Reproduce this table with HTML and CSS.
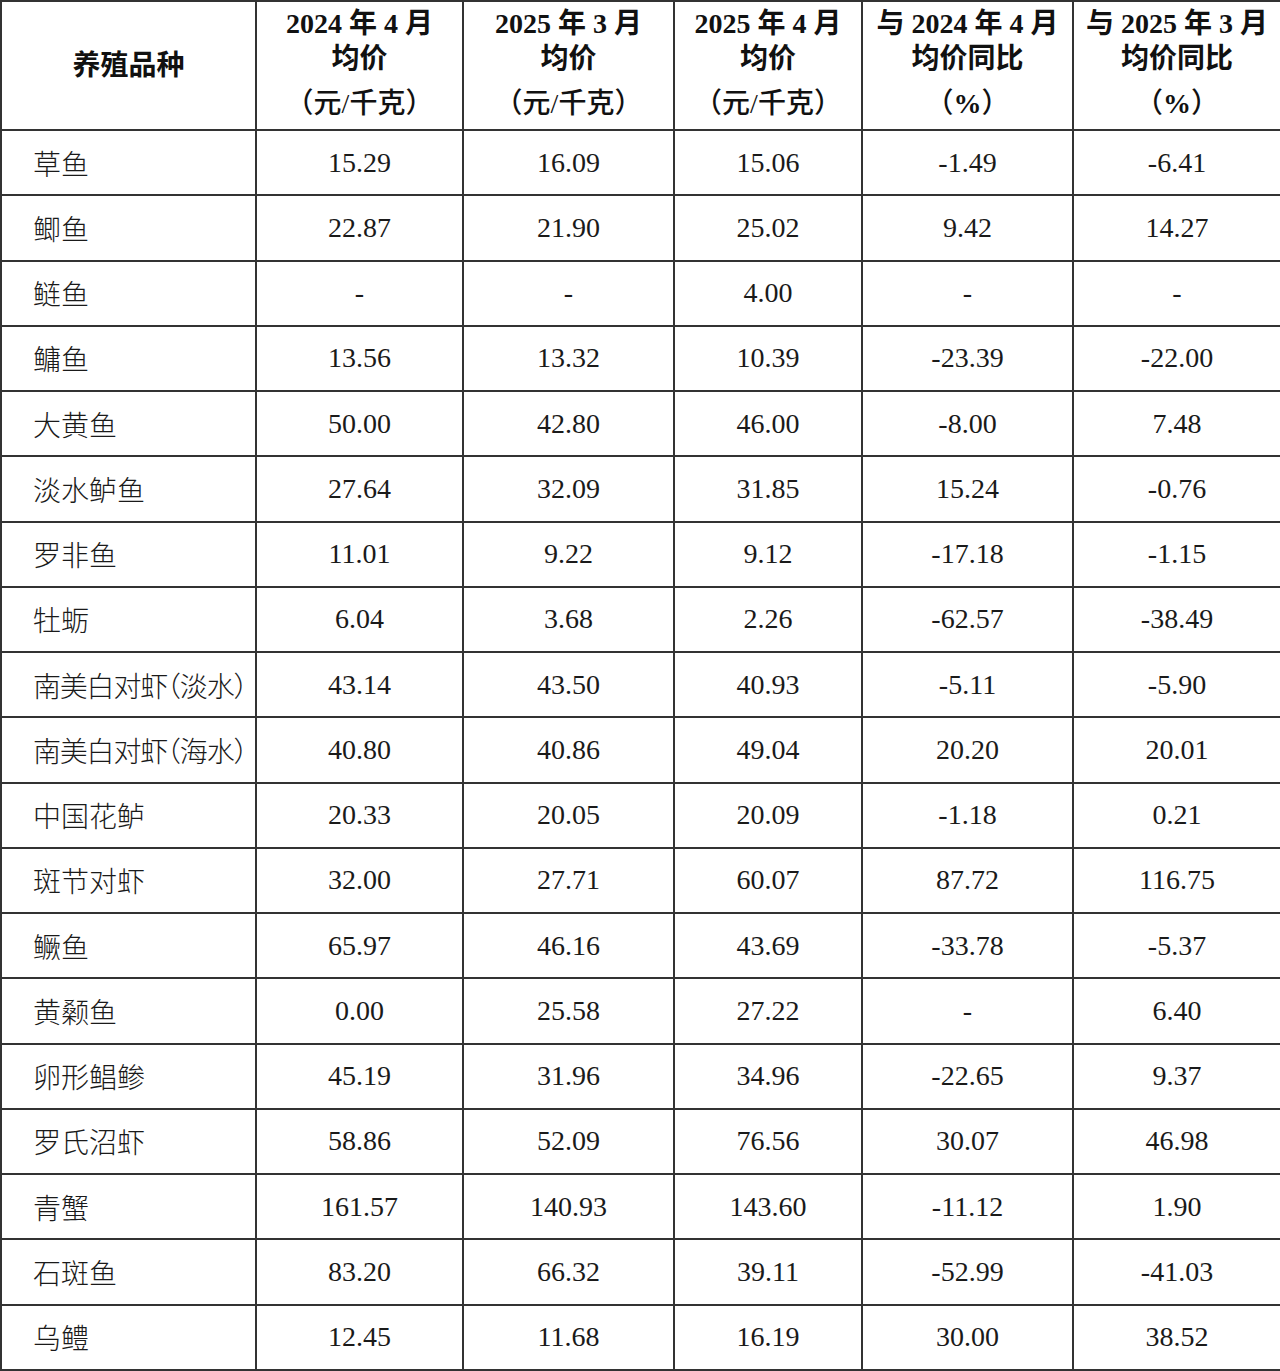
FILE: index.html
```html
<!DOCTYPE html>
<html lang="zh-CN">
<head>
<meta charset="utf-8">
<link rel="stylesheet" href="styles.css">
</head>
<body>
<table class="price-table">
  <colgroup>
    <col class="c1"><col class="c2"><col class="c3"><col class="c4"><col class="c5"><col class="c6">
  </colgroup>
  <thead>
    <tr>
      <th class="name-head">养殖品种</th>
      <th><div class="hl">2024 年 4 月</div><div class="hl">均价</div><div class="hl unit">（元/千克）</div></th>
      <th><div class="hl">2025 年 3 月</div><div class="hl">均价</div><div class="hl unit">（元/千克）</div></th>
      <th><div class="hl">2025 年 4 月</div><div class="hl">均价</div><div class="hl unit">（元/千克）</div></th>
      <th><div class="hl">与 2024 年 4 月</div><div class="hl">均价同比</div><div class="hl unit">（<span class="pct">%</span>）</div></th>
      <th><div class="hl">与 2025 年 3 月</div><div class="hl">均价同比</div><div class="hl unit">（<span class="pct">%</span>）</div></th>
    </tr>
  </thead>
  <tbody>
    <tr><td class="name">草鱼</td><td>15.29</td><td>16.09</td><td>15.06</td><td>-1.49</td><td>-6.41</td></tr>
    <tr><td class="name">鲫鱼</td><td>22.87</td><td>21.90</td><td>25.02</td><td>9.42</td><td>14.27</td></tr>
    <tr><td class="name">鲢鱼</td><td>-</td><td>-</td><td>4.00</td><td>-</td><td>-</td></tr>
    <tr><td class="name">鳙鱼</td><td>13.56</td><td>13.32</td><td>10.39</td><td>-23.39</td><td>-22.00</td></tr>
    <tr><td class="name">大黄鱼</td><td>50.00</td><td>42.80</td><td>46.00</td><td>-8.00</td><td>7.48</td></tr>
    <tr><td class="name">淡水鲈鱼</td><td>27.64</td><td>32.09</td><td>31.85</td><td>15.24</td><td>-0.76</td></tr>
    <tr><td class="name">罗非鱼</td><td>11.01</td><td>9.22</td><td>9.12</td><td>-17.18</td><td>-1.15</td></tr>
    <tr><td class="name">牡蛎</td><td>6.04</td><td>3.68</td><td>2.26</td><td>-62.57</td><td>-38.49</td></tr>
    <tr><td class="name long">南美白对虾<span class="paren">（</span>淡水<span class="paren">）</span></td><td>43.14</td><td>43.50</td><td>40.93</td><td>-5.11</td><td>-5.90</td></tr>
    <tr><td class="name long">南美白对虾<span class="paren">（</span>海水<span class="paren">）</span></td><td>40.80</td><td>40.86</td><td>49.04</td><td>20.20</td><td>20.01</td></tr>
    <tr><td class="name">中国花鲈</td><td>20.33</td><td>20.05</td><td>20.09</td><td>-1.18</td><td>0.21</td></tr>
    <tr><td class="name">斑节对虾</td><td>32.00</td><td>27.71</td><td>60.07</td><td>87.72</td><td>116.75</td></tr>
    <tr><td class="name">鳜鱼</td><td>65.97</td><td>46.16</td><td>43.69</td><td>-33.78</td><td>-5.37</td></tr>
    <tr><td class="name">黄颡鱼</td><td>0.00</td><td>25.58</td><td>27.22</td><td>-</td><td>6.40</td></tr>
    <tr><td class="name">卵形鲳鲹</td><td>45.19</td><td>31.96</td><td>34.96</td><td>-22.65</td><td>9.37</td></tr>
    <tr><td class="name">罗氏沼虾</td><td>58.86</td><td>52.09</td><td>76.56</td><td>30.07</td><td>46.98</td></tr>
    <tr><td class="name">青蟹</td><td>161.57</td><td>140.93</td><td>143.60</td><td>-11.12</td><td>1.90</td></tr>
    <tr><td class="name">石斑鱼</td><td>83.20</td><td>66.32</td><td>39.11</td><td>-52.99</td><td>-41.03</td></tr>
    <tr><td class="name">乌鳢</td><td>12.45</td><td>11.68</td><td>16.19</td><td>30.00</td><td>38.52</td></tr>
  </tbody>
</table>
</body>
</html>
```

FILE: styles.css
```css
html, body {
  margin: 0;
  padding: 0;
  background: #ffffff;
}

.price-table {
  width: 1280px;
  table-layout: fixed;
  border-collapse: collapse;
  font-family: "Liberation Serif", "Noto Sans CJK SC", serif;
  font-size: 28px;
  color: #1a1a1a;
}

.c1 { width: 255px; }
.c2 { width: 207px; }
.c3 { width: 211px; }
.c4 { width: 188px; }
.c5 { width: 211px; }
.c6 { width: 208px; }

.price-table th,
.price-table td {
  border: 2px solid #333333;
  padding: 0;
  text-align: center;
  vertical-align: middle;
}

.price-table th {
  height: 122px;
  padding-bottom: 5px;
  font-weight: bold;
  color: #111111;
}

.hl {
  line-height: 35px;
  white-space: nowrap;
}

.hl.unit {
  margin-top: 10px;
  font-weight: 500;
}

.hl.unit .pct {
  font-weight: bold;
}

.price-table td {
  height: 63.26px;
  line-height: 30px;
}

.price-table td.name {
  text-align: left;
  padding-left: 31px;
  font-family: "Noto Sans CJK SC", sans-serif;
  font-weight: 300;
  white-space: nowrap;
}

.price-table td.long {
  letter-spacing: -1.2px;
}

.paren {
  font-feature-settings: "halt";
}
```
